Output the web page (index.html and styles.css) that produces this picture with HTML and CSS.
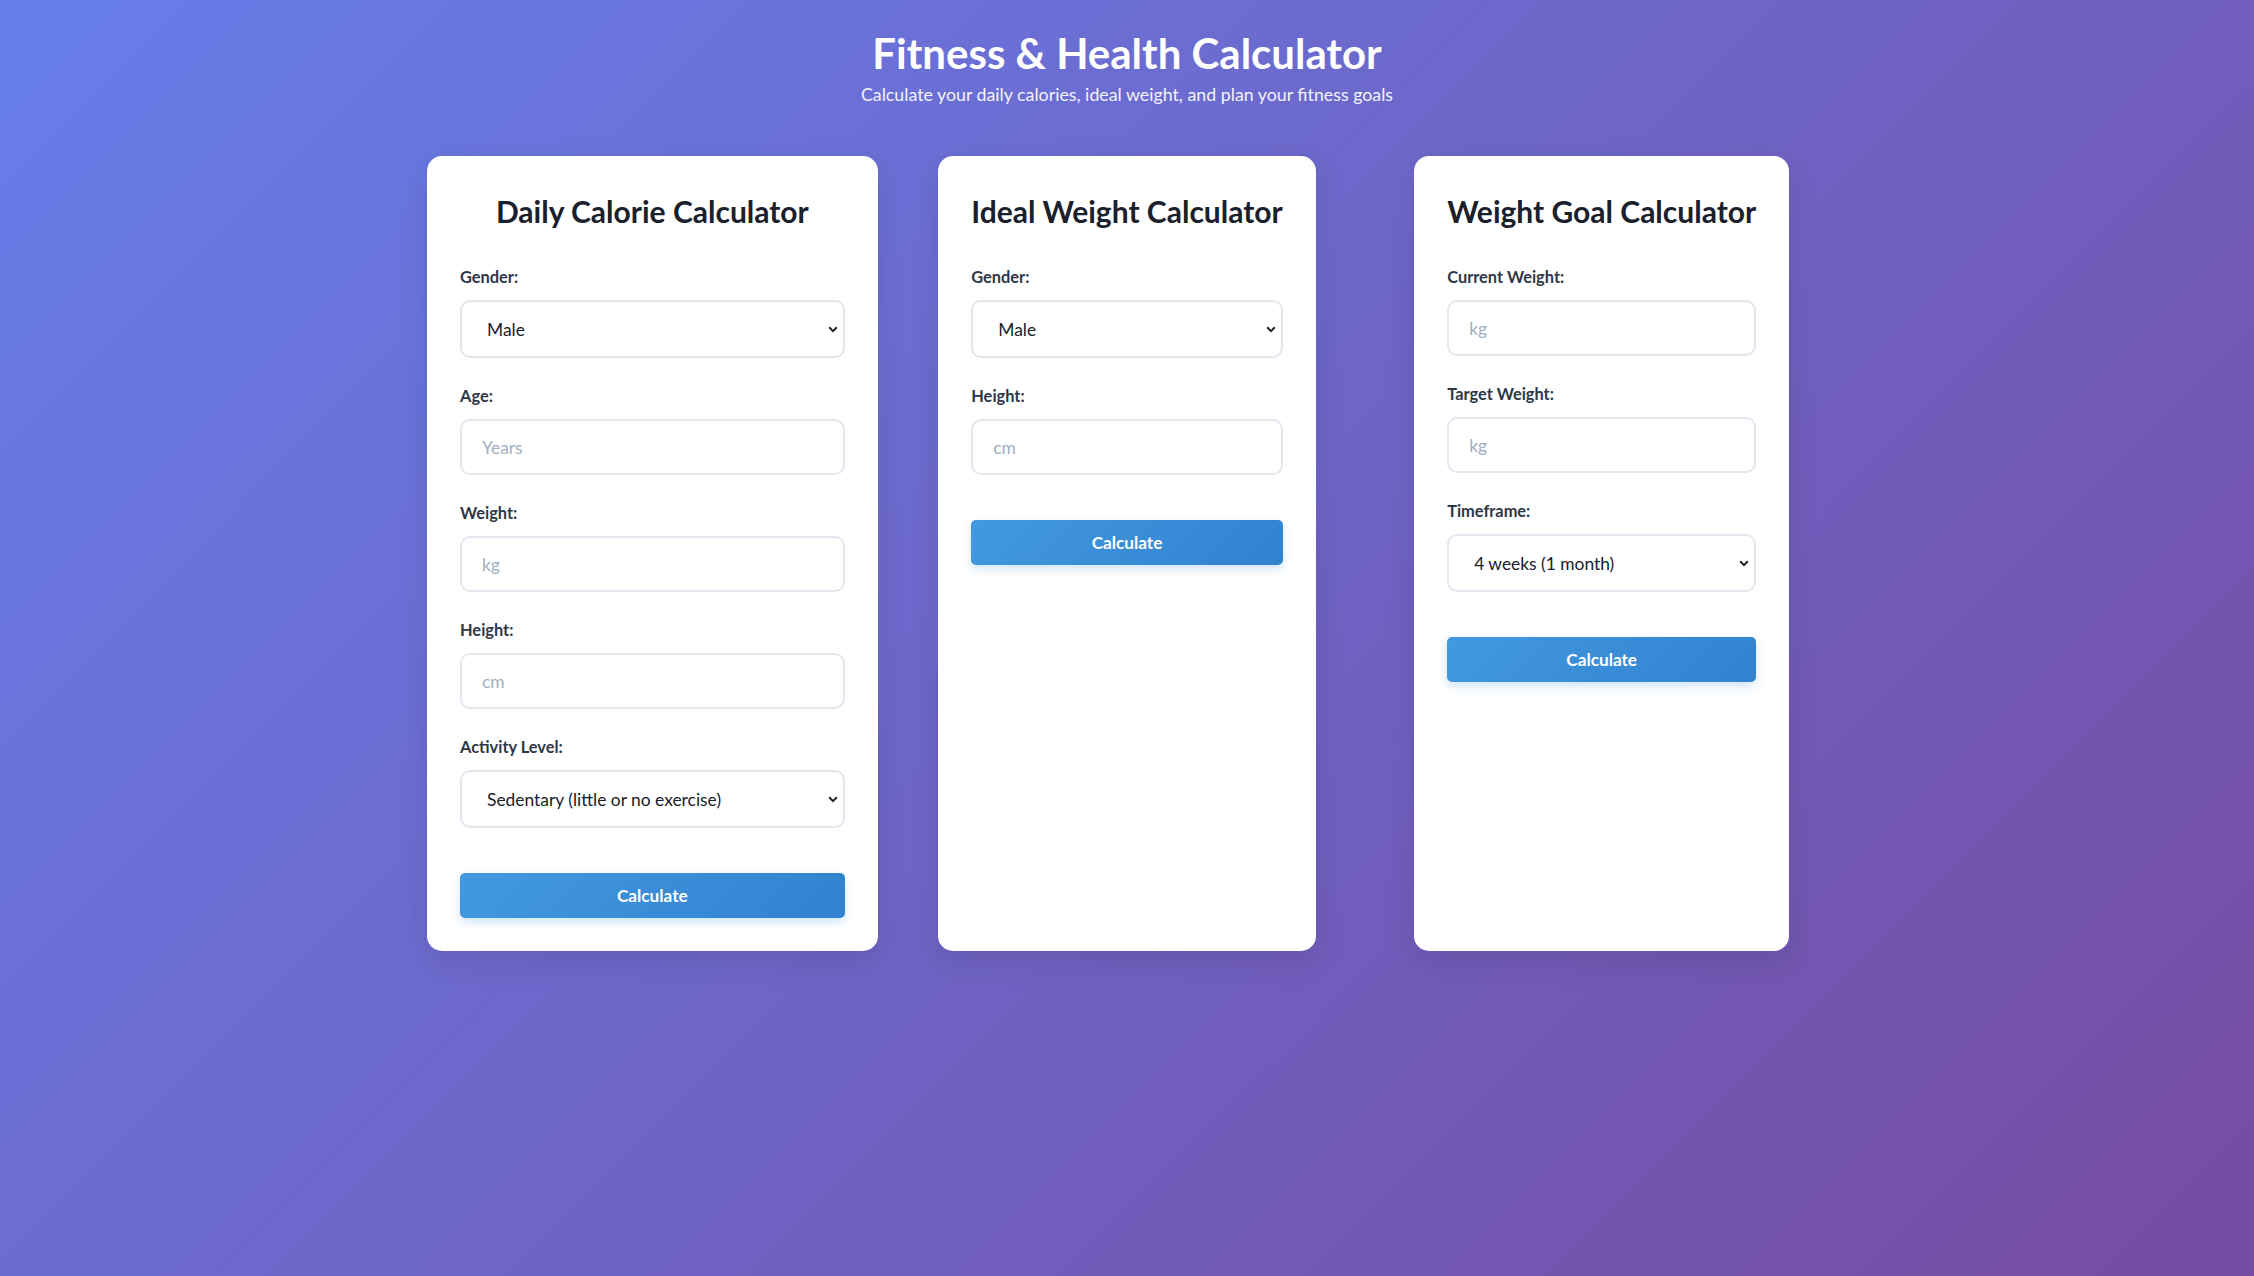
FILE: index.html
```html
<!DOCTYPE html>
<html lang="en">
<head>
<meta charset="utf-8">
<title>Fitness &amp; Health Calculator</title>
<link rel="stylesheet" href="styles.css">
</head>
<body>
<header class="header">
  <h1 class="header__title">Fitness &amp; Health Calculator</h1>
  <p class="header__subtitle">Calculate your daily calories, ideal weight, and plan your fitness goals</p>
</header>

<main class="calculators">
  <section class="card card--wide">
    <h2 class="card__title">Daily Calorie Calculator</h2>
    <div class="field">
      <label class="field__label" for="cal-gender">Gender:</label>
      <select class="field__control field__control--select" id="cal-gender">
        <option>Male</option>
        <option>Female</option>
      </select>
    </div>
    <div class="field">
      <label class="field__label" for="cal-age">Age:</label>
      <input class="field__control" id="cal-age" type="number" placeholder="Years">
    </div>
    <div class="field">
      <label class="field__label" for="cal-weight">Weight:</label>
      <input class="field__control" id="cal-weight" type="number" placeholder="kg">
    </div>
    <div class="field">
      <label class="field__label" for="cal-height">Height:</label>
      <input class="field__control" id="cal-height" type="number" placeholder="cm">
    </div>
    <div class="field">
      <label class="field__label" for="cal-activity">Activity Level:</label>
      <select class="field__control field__control--select" id="cal-activity">
        <option>Sedentary (little or no exercise)</option>
        <option>Lightly active (light exercise 1-3 days/week)</option>
        <option>Moderately active (moderate exercise 3-5 days/week)</option>
        <option>Very active (hard exercise 6-7 days/week)</option>
        <option>Extra active (very hard exercise &amp; physical job)</option>
      </select>
    </div>
    <button class="btn" type="button">Calculate</button>
  </section>

  <section class="card">
    <h2 class="card__title">Ideal Weight Calculator</h2>
    <div class="field">
      <label class="field__label" for="ideal-gender">Gender:</label>
      <select class="field__control field__control--select" id="ideal-gender">
        <option>Male</option>
        <option>Female</option>
      </select>
    </div>
    <div class="field">
      <label class="field__label" for="ideal-height">Height:</label>
      <input class="field__control" id="ideal-height" type="number" placeholder="cm">
    </div>
    <button class="btn" type="button">Calculate</button>
  </section>

  <section class="card">
    <h2 class="card__title">Weight Goal Calculator</h2>
    <div class="field">
      <label class="field__label" for="goal-current">Current Weight:</label>
      <input class="field__control" id="goal-current" type="number" placeholder="kg">
    </div>
    <div class="field">
      <label class="field__label" for="goal-target">Target Weight:</label>
      <input class="field__control" id="goal-target" type="number" placeholder="kg">
    </div>
    <div class="field">
      <label class="field__label" for="goal-time">Timeframe:</label>
      <select class="field__control field__control--select" id="goal-time">
        <option>4 weeks (1 month)</option>
        <option>8 weeks (2 months)</option>
        <option>12 weeks (3 months)</option>
        <option>24 weeks (6 months)</option>
      </select>
    </div>
    <button class="btn" type="button">Calculate</button>
  </section>
</main>
</body>
</html>
```

FILE: styles.css
```css
* {
  box-sizing: border-box;
}

html {
  min-height: 100%;
}

body {
  margin: 0;
  min-height: 100vh;
  padding: 22px 20px 20px;
  font-family: Lato, "Noto Sans", "Liberation Sans", sans-serif;
  color: #2d3748;
  background: linear-gradient(135deg, #667eea 0%, #764ba2 100%);
}

.header {
  text-align: center;
  color: #ffffff;
  margin-bottom: 51px;
}

.header__title {
  margin: 7px 0 6px;
  font-size: 42px;
  font-weight: 700;
  line-height: 48px;
}

.header__subtitle {
  margin: 0;
  font-size: 17.8px;
  line-height: 22px;
  opacity: 0.92;
}

.calculators {
  display: grid;
  grid-template-columns: repeat(3, 1fr);
  gap: 24px;
  max-width: 1400px;
  margin: 0 auto;
  justify-items: center;
}

.card {
  width: fit-content;
  max-width: 100%;
  background: #ffffff;
  border-radius: 15px;
  padding: 32px 33px 33px;
  box-shadow: 0 10px 30px rgba(0, 0, 0, 0.1);
}

.card--wide {
  width: 100%;
}

.card__title {
  margin: 5px 0 38px;
  font-size: 30px;
  line-height: 36px;
  font-weight: 700;
  color: #1a202c;
  text-align: center;
  white-space: nowrap;
}

.field {
  margin-bottom: 28px;
}

.field__label {
  display: block;
  margin-bottom: 13px;
  font-size: 16.4px;
  line-height: 20px;
  font-weight: 700;
  color: #2d3748;
}

.field__control {
  display: block;
  width: 100%;
  height: 56px;
  padding: 0 20px;
  font-family: inherit;
  font-size: 17.4px;
  color: #1a202c;
  background: #ffffff;
  border: 2px solid #e2e8f0;
  border-radius: 10px;
  outline: none;
}

.field__control::placeholder {
  color: #a0aec0;
}

.field__control--select {
  height: 58px;
  padding: 0 30px 0 25px;
  appearance: none;
  -webkit-appearance: none;
  background-image: url("data:image/svg+xml;utf8,<svg xmlns='http://www.w3.org/2000/svg' width='10' height='7' viewBox='0 0 10 7'><path d='M1.2 1.3 5 5.1 8.8 1.3' fill='none' stroke='%231a202c' stroke-width='2'/></svg>");
  background-repeat: no-repeat;
  background-position: right 5px center;
  background-size: 10px 7px;
}

.btn {
  display: block;
  width: 100%;
  height: 45px;
  margin-top: 45px;
  border: none;
  border-radius: 5px;
  font-family: inherit;
  font-size: 17.2px;
  font-weight: 700;
  color: #ffffff;
  background: linear-gradient(135deg, #4299e1 0%, #3182ce 100%);
  box-shadow: 0 4px 10px rgba(66, 153, 225, 0.25);
  cursor: pointer;
}
```
